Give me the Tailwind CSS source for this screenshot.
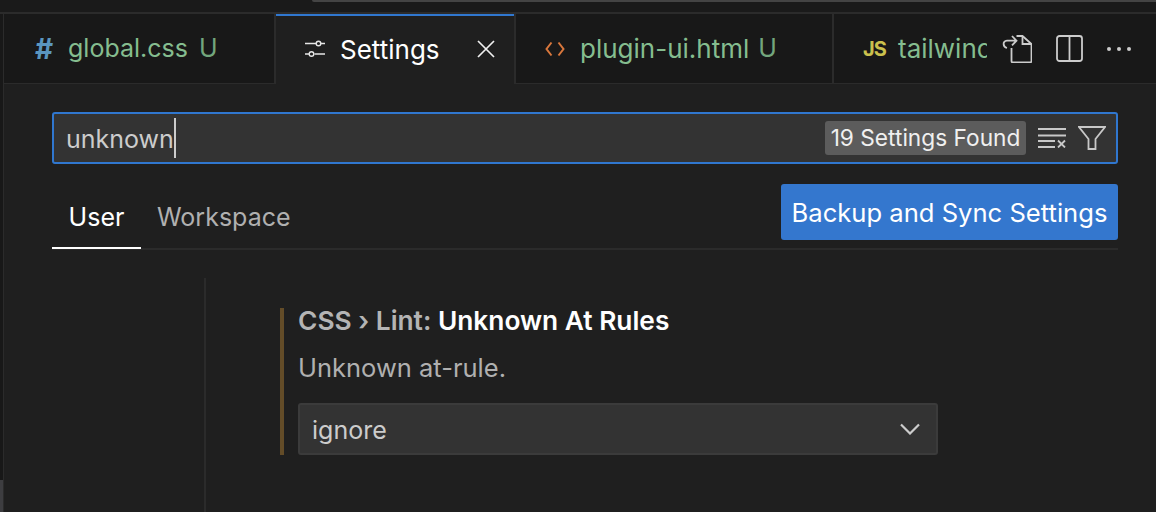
<!DOCTYPE html>
<html lang="en">
<head>
  <meta charset="UTF-8" />
  <title>Settings</title>
  <script src="https://cdn.jsdelivr.net/npm/@tailwindcss/browser@4"></script>
</head>
<body class="w-[1156px] h-[512px] overflow-hidden bg-[#1f1f1f] font-['Inter',sans-serif] text-[25px] text-[#cccccc]">
  <!-- Window top strip -->
  <div class="h-[12px] bg-[#1a1a1a] relative">
    <div class="absolute left-[312px] right-0 top-0 h-[2px] bg-[#444444] rounded-bl-[4px]"></div>
  </div>
  <div class="h-[2px] bg-[#2b2b2b]"></div>

  <div class="flex h-[498px] overflow-hidden">
    <!-- Activity bar edge -->
    <div class="w-[3px] bg-[#181818] flex flex-col justify-end"><div class="h-[32px] bg-[#3d3d40]"></div></div>
    <div class="w-px bg-[#2b2b2b]"></div>

    <div class="flex-1 min-w-0">
      <!-- Tabs -->
      <div class="relative flex h-[70px] bg-[#181818] border-b border-[#2b2b2b]">
        <div class="flex items-center w-[272px] pl-[31px] border-r-2 border-[#2b2b2b] shrink-0">
          <span class="w-[33px] text-[#5a96bf] font-bold text-[28px] leading-none">#</span>
          <span class="text-[#85bd8f]">global.css</span>
          <span class="ml-[11px] text-[#73a67d]">U</span>
        </div>
        <div class="flex items-center w-[238px] h-[70px] pl-[29px] pb-[2px] bg-[#1f1f1f] border-t-2 border-[#3077cf] shrink-0">
          <svg class="w-[20px] h-[18px] mr-[15px]" viewBox="0 0 20 18" fill="none" stroke="#e6e6e6" stroke-width="1.4">
            <path d="M0 3.500h11M16 3.500h4M0 14h4M9.500 14H20" />
            <circle cx="13.500" cy="3.500" r="2.300" />
            <circle cx="6.500" cy="14" r="2.300" />
          </svg>
          <span class="text-white text-[26px]">Settings</span>
          <svg class="w-[18px] h-[18px] ml-[37px]" viewBox="0 0 18 18" fill="none" stroke="#f0f0f0" stroke-width="1.700">
            <path d="M1 1l16 16M17 1L1 17" />
          </svg>
        </div>
        <div class="flex items-center w-[320px] pl-[29px] border-x-2 border-[#2b2b2b] shrink-0">
          <svg class="w-[20px] h-[16px] mr-[15px]" viewBox="0 0 20 16" fill="none" stroke="#d9773c" stroke-width="2">
            <path d="M6.500 1.500L1.500 8l5 6.500M13.500 1.500l5 6.500-5 6.500" />
          </svg>
          <span class="text-[#85bd8f] text-[26px]">plugin-ui.html</span>
          <span class="ml-[9px] text-[#73a67d]">U</span>
        </div>
        <div class="flex items-center pl-[29px] min-w-0 overflow-hidden shrink-0">
          <span class="w-[35px] shrink-0 text-[#cbc14d] font-bold text-[20px] leading-none tracking-tighter">JS</span>
          <span class="text-[#85bd8f] text-[26px] whitespace-nowrap">tailwind</span>
        </div>
        <!-- Editor actions -->
        <div class="flex items-center gap-[24px] absolute right-0 top-0 h-[69px] w-[169px] pl-[15px] bg-[#181818]">
          <svg class="w-[30px] h-[28px]" viewBox="0 0 30 28" fill="none" stroke="#cccccc" stroke-width="1.800">
            <path d="M9.500 13v13a1.500 1.500 0 0 0 1.500 1.500h17a1.500 1.500 0 0 0 1.500-1.500V9l-9-8h-6" />
            <path d="M20.500 1v8h9" />
            <path d="M5 13C1 12 0 6 5 5.700h9M10 1l4.500 4.700-4.500 4.700" />
          </svg>
          <svg class="w-[27px] h-[27px]" viewBox="0 0 27 27" fill="none" stroke="#cccccc" stroke-width="1.800">
            <rect x="1" y="1" width="25" height="25" rx="2.500" />
            <path d="M13.500 1v25" />
          </svg>
          <div class="flex gap-[6px]">
            <span class="w-[4px] h-[4px] rounded-full bg-[#cccccc]"></span>
            <span class="w-[4px] h-[4px] rounded-full bg-[#cccccc]"></span>
            <span class="w-[4px] h-[4px] rounded-full bg-[#cccccc]"></span>
          </div>
        </div>
      </div>

      <!-- Settings editor -->
      <div class="pl-[48px] pr-[38px] pt-[28px]">
        <div class="flex items-center h-[52px] pl-[12px] pr-[10px] rounded-[3px] bg-[#333333] border-2 border-[#3077cf]">
          <span class="text-[#cccccc] pt-[3px]">unknown</span>
          <span class="w-[2px] h-[40px] bg-[#cccccc]"></span>
          <span class="ml-auto w-[201px] h-[34px] flex items-center justify-center rounded-[3px] bg-[#5c5c5c] text-[#f0f0f0] text-[22.700px]">19 Settings Found</span>
          <svg class="w-[28px] h-[20px] ml-[12px]" viewBox="0 0 28 20" fill="none" stroke="#c8c8c8" stroke-width="1.800">
            <path d="M0 1h28M0 7.500h28M0 13h17M0 19h17M20 12.500l7 7M27 12.500l-7 7" />
          </svg>
          <svg class="w-[28px] h-[24px] ml-[12px]" viewBox="0 0 28 24" fill="none" stroke="#c8c8c8" stroke-width="1.800">
            <path d="M1 1h26L17.500 13v10h-7V13z" />
          </svg>
        </div>

        <!-- Scope tabs -->
        <div class="flex items-end justify-between h-[86px] border-b-2 border-[#2b2b2b]">
          <div class="flex">
            <div class="w-[89px] h-[64px] pt-[14px] text-center text-white border-b-2 border-white -mb-px">User</div>
            <div class="pl-[16px] pt-[14px] text-[#b0b0b0]">Workspace</div>
          </div>
          <div class="mb-[8px] h-[56px] w-[337px] pt-[2px] flex items-center justify-center rounded-[3px] bg-[#3477ce] text-white text-[25.600px]">Backup and Sync Settings</div>
        </div>

        <!-- Setting row -->
        <div class="ml-[152px] h-[234px] border-l-2 border-[#2b2b2b] mt-[28px] pl-[74px] pt-[30px]">
          <div class="border-l-[4px] border-[#634c28] pl-[14px] h-[147px] w-[658px]">
            <div class="font-semibold text-[26.300px] leading-[26px] h-[26px] text-[#b4b4b4] whitespace-nowrap">CSS › Lint: <span class="text-white">Unknown At Rules</span></div>
            <div class="mt-[19px] leading-[30px] text-[25.500px] text-[#b0b0b0]">Unknown at-rule.</div>
            <div class="mt-[20px] h-[52px] w-[640px] flex items-center justify-between pl-[12px] pr-[16px] rounded-[3px] bg-[#333333] border-2 border-[#3b3b3b]">
              <span class="pt-[3px]">ignore</span>
              <svg class="w-[20px] h-[12px]" viewBox="0 0 20 12" fill="none" stroke="#cccccc" stroke-width="2.200">
                <path d="M1 1.500l9 9 9-9" />
              </svg>
            </div>
          </div>
        </div>
      </div>
    </div>
  </div>
</body>
</html>
